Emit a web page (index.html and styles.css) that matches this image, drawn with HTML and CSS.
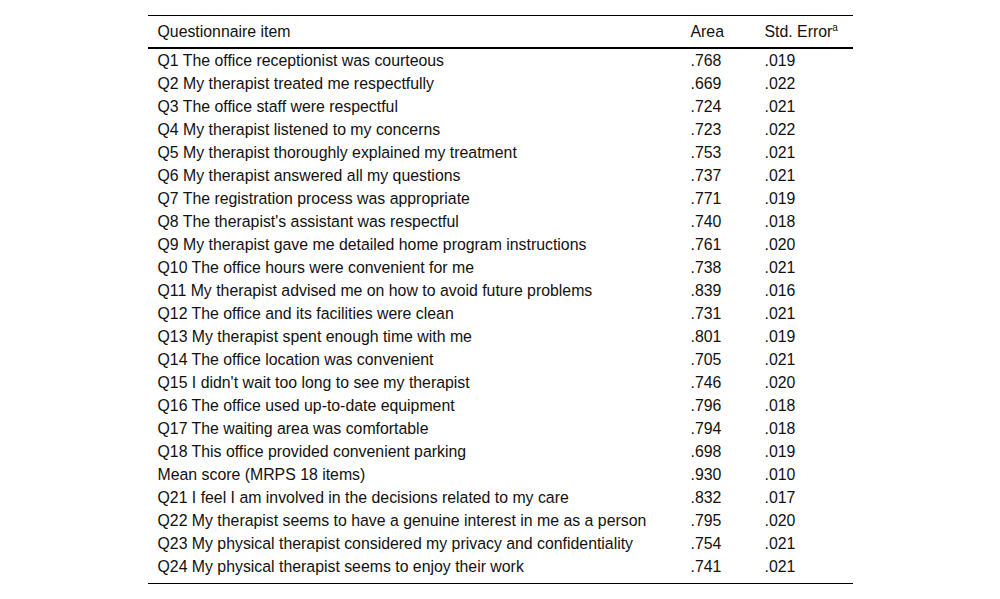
FILE: index.html
```html
<!DOCTYPE html>
<html>
<head>
<meta charset="utf-8">
<link rel="stylesheet" href="styles.css">
</head>
<body>
<div class="wrap">
<table class="tbl">
<thead>
<tr><th class="item">Questionnaire item</th><th class="area">Area</th><th class="err">Std. Error<sup>a</sup></th></tr>
</thead>
<tbody>
<tr><td>Q1 The office receptionist was courteous</td><td>.768</td><td>.019</td></tr>
<tr><td>Q2 My therapist treated me respectfully</td><td>.669</td><td>.022</td></tr>
<tr><td>Q3 The office staff were respectful</td><td>.724</td><td>.021</td></tr>
<tr><td>Q4 My therapist listened to my concerns</td><td>.723</td><td>.022</td></tr>
<tr><td>Q5 My therapist thoroughly explained my treatment</td><td>.753</td><td>.021</td></tr>
<tr><td>Q6 My therapist answered all my questions</td><td>.737</td><td>.021</td></tr>
<tr><td>Q7 The registration process was appropriate</td><td>.771</td><td>.019</td></tr>
<tr><td>Q8 The therapist's assistant was respectful</td><td>.740</td><td>.018</td></tr>
<tr><td>Q9 My therapist gave me detailed home program instructions</td><td>.761</td><td>.020</td></tr>
<tr><td>Q10 The office hours were convenient for me</td><td>.738</td><td>.021</td></tr>
<tr><td>Q11 My therapist advised me on how to avoid future problems</td><td>.839</td><td>.016</td></tr>
<tr><td>Q12 The office and its facilities were clean</td><td>.731</td><td>.021</td></tr>
<tr><td>Q13 My therapist spent enough time with me</td><td>.801</td><td>.019</td></tr>
<tr><td>Q14 The office location was convenient</td><td>.705</td><td>.021</td></tr>
<tr><td>Q15 I didn't wait too long to see my therapist</td><td>.746</td><td>.020</td></tr>
<tr><td>Q16 The office used up-to-date equipment</td><td>.796</td><td>.018</td></tr>
<tr><td>Q17 The waiting area was comfortable</td><td>.794</td><td>.018</td></tr>
<tr><td>Q18 This office provided convenient parking</td><td>.698</td><td>.019</td></tr>
<tr><td>Mean score (MRPS 18 items)</td><td>.930</td><td>.010</td></tr>
<tr><td>Q21 I feel I am involved in the decisions related to my care</td><td>.832</td><td>.017</td></tr>
<tr><td>Q22 My therapist seems to have a genuine interest in me as a person</td><td>.795</td><td>.020</td></tr>
<tr><td>Q23 My physical therapist considered my privacy and confidentiality</td><td>.754</td><td>.021</td></tr>
<tr class="last"><td>Q24 My physical therapist seems to enjoy their work</td><td>.741</td><td>.021</td></tr>
</tbody>
</table>
</div>
</body>
</html>
```
FILE: styles.css
```css
html, body {
  margin: 0;
  padding: 0;
  background: #ffffff;
}
.wrap {
  padding-top: 15px;
  display: flex;
  justify-content: center;
}
.tbl {
  width: 705px;
  border-collapse: collapse;
  font-family: "Liberation Sans", Arial, sans-serif;
  font-size: 15.85px;
  color: #111111;
  border-top: 1px solid #000;
  border-bottom: 1px solid #000;
}
.tbl th {
  font-weight: normal;
  text-align: left;
  padding: 4px 10px;
  line-height: 23px;
  border-bottom: 2px solid #000;
}
.tbl td {
  padding: 0 10px;
  line-height: 23px;
  text-align: left;
}
.tbl th.area { width: 54px; }
.tbl th.err { width: 78px; }
.tbl tr.last td { padding-bottom: 5px; vertical-align: top; }
.tbl sup {
  font-size: 10px;
  line-height: 0;
  vertical-align: 6px;
}
```
